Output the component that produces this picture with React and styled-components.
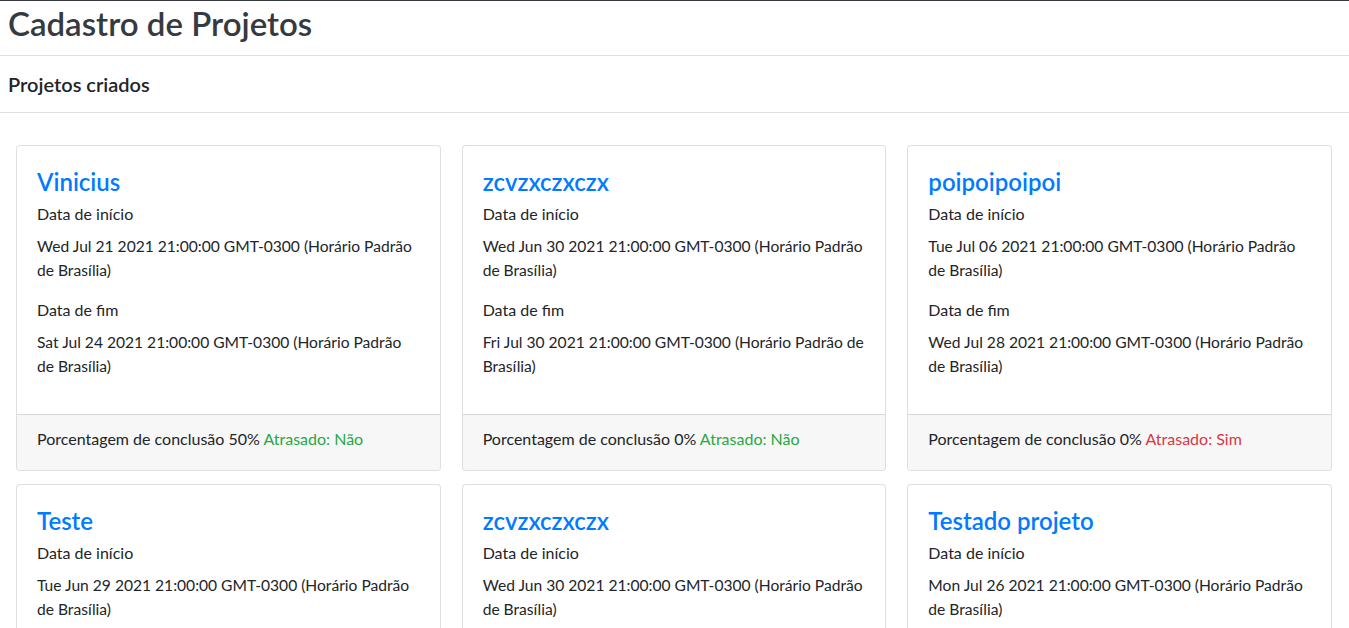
import React from 'react'
import styled, { createGlobalStyle } from 'styled-components'

const GlobalStyle = createGlobalStyle`
    * { box-sizing: border-box; }
    body {
        margin: 0;
        font-family: "Segoe UI", Lato, "Noto Sans", Arial, sans-serif;
        font-size: 16px;
        line-height: 24px;
        color: #212529;
        background: #fff;
        border-top: 1px solid #343a40;
    }
`

const projetos = [
    { id: 1, title: 'Vinicius', inicio: 'Wed Jul 21 2021 21:00:00 GMT-0300 (Horário Padrão de Brasília)', fim: 'Sat Jul 24 2021 21:00:00 GMT-0300 (Horário Padrão de Brasília)', pct: 50, atrasado: false },
    { id: 2, title: 'zcvzxczxczx', inicio: 'Wed Jun 30 2021 21:00:00 GMT-0300 (Horário Padrão de Brasília)', fim: 'Fri Jul 30 2021 21:00:00 GMT-0300 (Horário Padrão de Brasília)', pct: 0, atrasado: false },
    { id: 3, title: 'poipoipoipoi', inicio: 'Tue Jul 06 2021 21:00:00 GMT-0300 (Horário Padrão de Brasília)', fim: 'Wed Jul 28 2021 21:00:00 GMT-0300 (Horário Padrão de Brasília)', pct: 0, atrasado: true },
    { id: 4, title: 'Teste', inicio: 'Tue Jun 29 2021 21:00:00 GMT-0300 (Horário Padrão de Brasília)', fim: 'Thu Jul 01 2021 21:00:00 GMT-0300 (Horário Padrão de Brasília)', pct: 0, atrasado: true },
    { id: 5, title: 'zcvzxczxczx', inicio: 'Wed Jun 30 2021 21:00:00 GMT-0300 (Horário Padrão de Brasília)', fim: 'Fri Jul 30 2021 21:00:00 GMT-0300 (Horário Padrão de Brasília)', pct: 0, atrasado: false },
    { id: 6, title: 'Testado projeto', inicio: 'Mon Jul 26 2021 21:00:00 GMT-0300 (Horário Padrão de Brasília)', fim: 'Fri Jul 30 2021 21:00:00 GMT-0300 (Horário Padrão de Brasília)', pct: 0, atrasado: false },
]

function App() {
    return (
        <>
            <GlobalStyle />
            <PageTitle>Cadastro de Projetos</PageTitle>
            <SectionTitle>Projetos criados</SectionTitle>
            <CardGrid>
                {projetos.map((p) => (
                    <Card key={p.id}>
                        <CardBody>
                            <CardTitle>{p.title}</CardTitle>
                            <Label>Data de início</Label>
                            <DateText>{p.inicio}</DateText>
                            <Label>Data de fim</Label>
                            <DateText>{p.fim}</DateText>
                        </CardBody>
                        <CardFooter>
                            Porcentagem de conclusão {p.pct}%{' '}
                            <Status $late={p.atrasado}>Atrasado: {p.atrasado ? 'Sim' : 'Não'}</Status>
                        </CardFooter>
                    </Card>
                ))}
            </CardGrid>
        </>
    )
}

export default App

const PageTitle = styled.h1`
    margin: 0;
    padding: 0 8px;
    height: 55px;
    font-size: 33px;
    font-weight: 600;
    line-height: 44px;
    color: #343a40;
    border-bottom: 1px solid #e0e0e0;
`

const SectionTitle = styled.h5`
    margin: 0;
    padding: 0 8px;
    height: 57px;
    font-size: 20px;
    font-weight: 600;
    line-height: 57px;
    color: #212529;
    border-bottom: 1px solid #e0e0e0;
`

const CardGrid = styled.div`
    display: grid;
    grid-template-columns: repeat(3, 1fr);
    column-gap: 21px;
    row-gap: 13px;
    padding: 32px 17px 0 16px;
`

const Card = styled.div`
    display: flex;
    flex-direction: column;
    background: #fff;
    border: 1px solid rgba(0, 0, 0, 0.125);
    border-radius: 4px;
`

const CardBody = styled.div`
    flex: 1;
    padding: 22px 20px 20px;
`

const CardTitle = styled.h4`
    margin: 0 0 5px;
    font-size: 24px;
    font-weight: 600;
    line-height: 28.8px;
    color: #007bff;
`

const Label = styled.p`
    margin: 0 0 8px;
`

const DateText = styled.p`
    margin: 0 0 16px;
    font-size: 15.6px;
`

const CardFooter = styled.div`
    padding: 12px 20px 19px;
    background: #f7f7f7;
    border-top: 1px solid rgba(0, 0, 0, 0.125);
    border-radius: 0 0 3px 3px;
`

const Status = styled.span`
    color: ${(p) => (p.$late ? '#dc3545' : '#28a745')};
`
